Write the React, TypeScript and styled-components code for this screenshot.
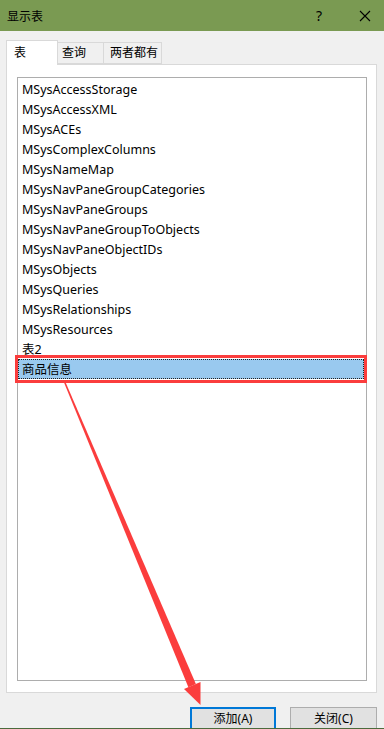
import React from "react";
import styled, { createGlobalStyle } from "styled-components";

const Global = createGlobalStyle`
  html, body { margin: 0; padding: 0; }
  body {
    background: #f0f0f0;
    font-family: "Noto Sans", "Noto Sans CJK SC", sans-serif;
    font-size: 12px;
    color: #000;
  }
`;

const Window = styled.div`
  position: relative;
  width: 384px;
  height: 729px;
  overflow: hidden;
  display: flex;
  flex-direction: column;
  background: #f0f0f0;
`;

const TitleBar = styled.div`
  height: 31px;
  flex: none;
  background: #7a9a52;
  display: flex;
  align-items: center;
  padding-left: 7px;
  font-size: 12px;
`;

const Title = styled.div`
  flex: 1;
`;

const TitleBtn = styled.div<{ $w: number }>`
  width: ${(p) => p.$w}px;
  height: 31px;
  display: flex;
  align-items: center;
  justify-content: center;
  font-size: 14px;
`;

const Body = styled.div`
  flex: 1;
  display: flex;
  flex-direction: column;
  padding: 9px 7px 0 6px;
`;

const TabStrip = styled.div`
  display: flex;
  align-items: flex-end;
  height: 24px;
  position: relative;
  z-index: 1;
`;

const Tab = styled.div<{ $active?: boolean; $w: number; $pl: number }>`
  box-sizing: border-box;
  width: ${(p) => p.$w}px;
  height: ${(p) => (p.$active ? 25 : 22)}px;
  margin-bottom: ${(p) => (p.$active ? -1 : 0)}px;
  margin-left: ${(p) => (p.$active ? 0 : -1)}px;
  padding-left: ${(p) => p.$pl}px;
  border: 1px solid #d9d9d9;
  border-bottom: ${(p) => (p.$active ? "none" : "1px solid #d9d9d9")};
  background: ${(p) => (p.$active ? "#fff" : "#f0f0f0")};
  display: flex;
  align-items: center;
  font-size: 12px;
  line-height: 1;
  padding-bottom: ${(p) => (p.$active ? 1 : 0)}px;
`;

const Panel = styled.div`
  box-sizing: border-box;
  height: 629px;
  background: #fff;
  border: 1px solid #d9d9d9;
  padding: 12px 9px 11px 10px;
  display: flex;
`;

const ListBox = styled.div`
  flex: 1;
  border: 1px solid #adadad;
  background: #fff;
  padding-top: 1px;
  display: flex;
  flex-direction: column;
`;

const Item = styled.div<{ $selected?: boolean }>`
  position: relative;
  box-sizing: border-box;
  height: 20px;
  line-height: 16px;
  padding-top: 2px;
  padding-left: 3px;
  font-size: 12.5px;
  margin-right: ${(p) => (p.$selected ? 2 : 0)}px;
  border: 1px ${(p) => (p.$selected ? "dotted #222" : "solid transparent")};
  background: ${(p) => (p.$selected ? "#99c9ef" : "transparent")};
  white-space: nowrap;
`;

const RedBox = styled.div`
  position: absolute;
  top: -5px;
  bottom: -5px;
  left: -4px;
  right: -4px;
  border: 3px solid #fb3d3d;
  pointer-events: none;
`;

const ButtonRow = styled.div`
  height: 21px;
  margin-top: 14px;
  overflow: hidden;
  display: flex;
  justify-content: flex-end;
  gap: 14px;
`;

const Button = styled.div<{ $default?: boolean }>`
  box-sizing: border-box;
  width: ${(p) => (p.$default ? 86 : 87)}px;
  height: 23px;
  background: #e1e1e1;
  border: ${(p) => (p.$default ? "2px solid #0078d7" : "1px solid #adadad")};
  display: flex;
  align-items: center;
  justify-content: center;
  font-size: 12px;
  padding-bottom: 2px;
`;

const BottomEdge = styled.div`
  height: 2px;
  flex: none;
  background: #4b6b3c;
`;

const Overlay = styled.svg`
  position: absolute;
  left: 0;
  top: 0;
  pointer-events: none;
`;

const items = [
  "MSysAccessStorage",
  "MSysAccessXML",
  "MSysACEs",
  "MSysComplexColumns",
  "MSysNameMap",
  "MSysNavPaneGroupCategories",
  "MSysNavPaneGroups",
  "MSysNavPaneGroupToObjects",
  "MSysNavPaneObjectIDs",
  "MSysObjects",
  "MSysQueries",
  "MSysRelationships",
  "MSysResources",
  "表2",
];

export default function App() {
  return (
    <>
      <Global />
      <Window>
        <TitleBar>
          <Title>显示表</Title>
          <TitleBtn $w={22}>?</TitleBtn>
          <TitleBtn $w={22} style={{ marginLeft: 24, marginRight: 8 }}>
            <svg width="12" height="12" viewBox="0 0 12 12">
              <path d="M1 1L11 11M11 1L1 11" stroke="#000" strokeWidth="1.1" fill="none" />
            </svg>
          </TitleBtn>
        </TitleBar>
        <Body>
          <TabStrip>
            <Tab $active $w={52} $pl={7}>表</Tab>
            <Tab $w={47} $pl={4}>查询</Tab>
            <Tab $w={59} $pl={6}>两者都有</Tab>
          </TabStrip>
          <Panel>
            <ListBox>
              {items.map((t) => (
                <Item key={t}>{t}</Item>
              ))}
              <Item $selected>
                商品信息
                <RedBox />
              </Item>
            </ListBox>
          </Panel>
          <ButtonRow>
            <Button $default>添加(A)</Button>
            <Button>关闭(C)</Button>
          </ButtonRow>
        </Body>
        <BottomEdge />
        <Overlay width="384" height="729" viewBox="0 0 384 729">
          <polygon
            points="65,381 63.6,381.6 188.4,687.3 195.9,684"
            fill="#fb3d3d"
          />
          <polygon points="200.5,705 200.5,682 184,689" fill="#fb3d3d" />
        </Overlay>
      </Window>
    </>
  );
}
